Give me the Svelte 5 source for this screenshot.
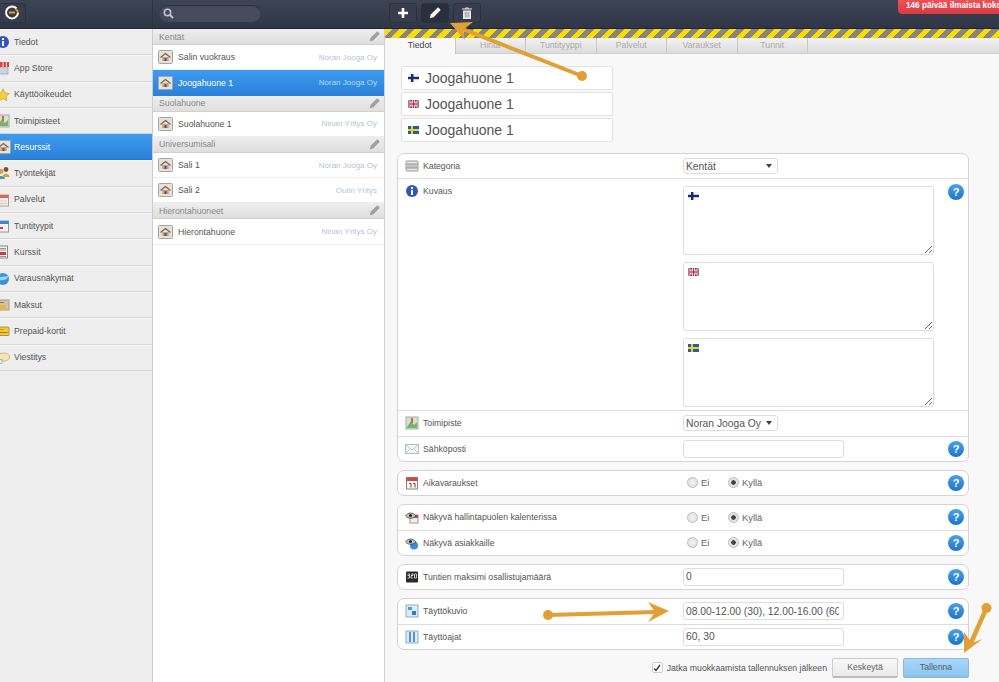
<script>
  const side = [
    ['Tiedot','info'],['App Store','store'],['Käyttöoikeudet','star'],['Toimipisteet','map'],
    ['Resurssit','house'],['Työntekijät','people'],['Palvelut','cal'],['Tuntityypit','cal2'],
    ['Kurssit','doc'],['Varausnäkymät','globe'],['Maksut','box'],['Prepaid-kortit','card'],['Viestitys','bubble']
  ];
  const groups = [
    { name:'Kentät', items:[['Salin vuokraus','Noran Jooga Oy'],['Joogahuone 1','Noran Jooga Oy',true]] },
    { name:'Suolahuone', items:[['Suolahuone 1','Ninan Yritys Oy']] },
    { name:'Universumisali', items:[['Sali 1','Noran Jooga Oy'],['Sali 2','Outin Yritys']] },
    { name:'Hierontahuoneet', items:[['Hierontahuone','Ninan Yritys Oy']] }
  ];
  const tabs = ['Tiedot','Hinta','Tuntityyppi','Palvelut','Varaukset','Tunnit'];
  const flags = ['fi','gb','se'];
</script>

{#snippet flag(k)}
  <svg class="flag" width="11" height="8" viewBox="0 0 11 8">
    {#if k==='fi'}
      <rect width="11" height="8" fill="#f4f4f8"/><rect x="3" width="2.4" height="8" fill="#1a2a6c"/><rect y="2.8" width="11" height="2.4" fill="#1a2a6c"/>
    {:else if k==='se'}
      <rect width="11" height="8" fill="#1f5fa8"/><rect x="3" width="2" height="8" fill="#f5cf2a"/><rect y="3" width="11" height="2" fill="#f5cf2a"/>
    {:else}
      <rect width="11" height="8" fill="#2a3a7c"/><path d="M0 0L11 8M11 0L0 8" stroke="#e8d8dc" stroke-width="1.8"/><path d="M0 0L11 8M11 0L0 8" stroke="#c8324a" stroke-width=".6"/><rect x="4" width="3" height="8" fill="#eee"/><rect y="2.5" width="11" height="3" fill="#eee"/><rect x="4.8" width="1.4" height="8" fill="#c8324a"/><rect y="3.3" width="11" height="1.4" fill="#c8324a"/>
    {/if}
  </svg>
{/snippet}

{#snippet houseIcon()}
  <svg width="15" height="14" viewBox="0 0 15 14">
    <rect x=".5" y=".5" width="14" height="13" rx="1" fill="#e4e2de" stroke="#a4a4a2"/>
    <path d="M2.5 7.5L7.5 3.5L12.5 7.5" fill="none" stroke="#8a5a42" stroke-width="1.2"/>
    <rect x="4.3" y="7" width="6.4" height="4" fill="#c0a288"/><rect x="6.5" y="8.2" width="2" height="2.8" fill="#6a4a38"/>
  </svg>
{/snippet}

{#snippet icon(k)}
  <svg width="14" height="14" viewBox="0 0 14 14">
    {#if k==='info'}
      <circle cx="7" cy="7" r="6" fill="#2f55c0"/><rect x="6" y="6" width="2" height="5" fill="#fff"/><rect x="6" y="3" width="2" height="2" fill="#fff"/>
    {:else if k==='store'}
      <rect x="2" y="6" width="10" height="7" fill="#c9d4e2" stroke="#8494a8" stroke-width=".6"/><rect x="1" y="1" width="12" height="5" fill="#d8443c"/><path d="M3.5 1v5M7 1v5M10.5 1v5" stroke="#f3e6e2"/>
    {:else if k==='star'}
      <path d="M7 .8l1.9 4 4.4.6-3.2 3 .8 4.4L7 10.7l-3.9 2.1.8-4.4-3.2-3 4.4-.6z" fill="#efd23c" stroke="#b89a2a" stroke-width=".6"/>
    {:else if k==='map'}
      <rect x="1" y="1" width="12" height="12" fill="#d4e4cc" stroke="#a4aea6"/><path d="M2 11L6 5l3 4 3-3v6H2z" fill="#7ab06a"/><path d="M7 2v5" stroke="#d8644c" stroke-width="2"/>
    {:else if k==='people'}
      <circle cx="5" cy="5.500" r="2.400" fill="#d89a5c"/><path d="M1 13c0-4 8-4 8 0z" fill="#3f9ac0"/><circle cx="10" cy="3.500" r="2.400" fill="#8a4a30"/><path d="M6.500 11c0-4.500 7-4.500 7 0z" fill="#d8a030"/>
    {:else if k==='cal'}
      <rect x="1.5" y="2" width="11" height="11" fill="#f6f2ec" stroke="#a8a29a"/><rect x="1.5" y="2" width="11" height="3" fill="#e0645c"/><path d="M3 8h8M3 10.500h8" stroke="#d8c8b8"/>
    {:else if k==='cal2'}
      <rect x="1.5" y="2" width="11" height="11" fill="#f6f2ec" stroke="#8a9aa8"/><rect x="1.5" y="2" width="11" height="3" fill="#3c8ac8"/><rect x="3" y="8" width="4" height="2" fill="#d8443c"/>
    {:else if k==='doc'}
      <rect x="2.500" y="1" width="9" height="12" fill="#f2f2f2" stroke="#8a8a8a"/><rect x="4" y="7" width="6" height="3" fill="#c83c3c"/><path d="M4 3.500h6M4 5h6M4 11.500h6" stroke="#999"/>
    {:else if k==='globe'}
      <circle cx="7" cy="7" r="6" fill="#3a94dc"/><path d="M2 6c3-2 7-1 10-2 0 3-3 4-5 4s-3 1-5-2z" fill="#a4d4f2"/>
    {:else if k==='box'}
      <rect x="1" y="2" width="12" height="10" fill="#d0c4a4" stroke="#a89c80"/><rect x="4" y="7" width="6" height="5" fill="#e0b850"/><path d="M4 4.500h4" stroke="#8a7a5a"/>
    {:else if k==='card'}
      <rect x="1" y="3" width="12" height="8.500" rx="1" fill="#f0c83c" stroke="#b8962a"/><path d="M2.500 8.500h9" stroke="#a07c20"/><path d="M3 5.500h5" stroke="#c09a2a"/>
    {:else if k==='bubble'}
      <ellipse cx="7.500" cy="6" rx="6" ry="4" fill="#f4e8b0" stroke="#c8b880"/><rect x="1" y="8.500" width="5" height="4" fill="#dcecf4" stroke="#88a0b0" stroke-width=".6"/>
    {:else if k==='bars'}
      <rect x="1" y="2" width="12" height="10" rx="1" fill="#e6e6e6" stroke="#999"/><rect x="1.500" y="5" width="11" height="4" fill="#c4c4c4"/><path d="M1 5h12M1 9h12" stroke="#999"/>
    {:else if k==='mail'}
      <rect x=".5" y="2.500" width="13" height="9" fill="#f4f6f8" stroke="#b4bec6"/><path d="M1 3l6 5 6-5M1 11l4-4M13 11l-4-4" fill="none" stroke="#c0cad2"/>
    {:else if k==='eyecal'}
      <rect x="5" y="5" width="8" height="8" fill="#f4f0ec" stroke="#999"/><rect x="5" y="5" width="8" height="3" fill="#cc3c3c"/><path d="M.5 6C3 2 8 2 11 6 8 9 3 9 .5 6z" fill="#c4c4c4" stroke="#333" stroke-width=".7"/><circle cx="5.500" cy="5.500" r="1.500" fill="#222"/>
    {:else if k==='eyeblue'}
      <circle cx="9" cy="9.500" r="4" fill="#3a8ed8"/><path d="M.5 6C3 2 8 2 11 6 8 9 3 9 .5 6z" fill="#c4c4c4" stroke="#333" stroke-width=".7"/><circle cx="5.500" cy="5.500" r="1.500" fill="#222"/>
    {:else if k==='count'}
      <rect x="1" y="1.500" width="12" height="11" rx="1" fill="#2a2a2a"/><path d="M2.500 4h2v1.500h-2M4.500 5.500V8h-2M6 4h2v1.500H6V8h2M9.500 4h2v4h-2z" fill="none" stroke="#eee" stroke-width=".8"/>
    {:else if k==='pattern'}
      <rect x="1" y="1" width="12" height="12" fill="#dcecf8" stroke="#8cacc8"/><rect x="3" y="3" width="4" height="3" fill="#5a94d8"/><rect x="7" y="7" width="4" height="4" fill="#3a7cc8"/>
    {:else if k==='times'}
      <rect x="1" y="1" width="12" height="12" fill="#dcecf8" stroke="#8cacc8"/><rect x="4" y="2" width="2" height="10" fill="#5a94d0"/><rect x="8" y="2" width="2" height="10" fill="#5a94d0"/>
    {:else if k==='date'}
      <rect x="1.500" y="1.500" width="11" height="11.500" fill="#f6f4f0" stroke="#888"/><rect x="1.500" y="1.500" width="11" height="3.500" fill="#d8443c"/><path d="M4 7.500h2v4M8 7.500h2v4" fill="none" stroke="#555"/>
    {/if}
  </svg>
{/snippet}

{#snippet help()}
  <span class="help">?</span>
{/snippet}

{#snippet radios()}
  <div class="radios">
    <span class="radio"></span><span class="rlabel">Ei</span>
    <span class="radio on"></span><span class="rlabel">Kyllä</span>
  </div>
{/snippet}

{#snippet pencil(color, size)}
  <svg width={size} height={size} viewBox="0 0 12 12"><path d="M.8 11.200l.9-3.800L8.500.8a1 1 0 0 1 1.300 0l1.400 1.400a1 1 0 0 1 0 1.300L4.600 10.300z" fill={color}/></svg>
{/snippet}

<div class="page">
  <header class="top">
    <div class="logo-wrap">
      <button class="tool logo" aria-label="Logo">
        <svg width="16" height="16" viewBox="0 0 16 16"><path d="M12.500 3.500A6 6 0 1 0 14 8" fill="none" stroke="#fff" stroke-width="2"/><path d="M5 7.500h6" stroke="#e8a020" stroke-width="2"/><path d="M11.500 4a5 5 0 0 1 2.500 4" fill="none" stroke="#e8a020" stroke-width="2"/></svg>
      </button>
    </div>
    <div class="search-wrap">
      <div class="search">
        <svg width="11" height="11" viewBox="0 0 11 11"><circle cx="4.500" cy="4.500" r="3.200" fill="none" stroke="#c4c8d0" stroke-width="1.500"/><path d="M7 7l3 3" stroke="#c4c8d0" stroke-width="1.800"/></svg>
      </div>
    </div>
    <div class="tools">
      <button class="tool" aria-label="Lisää"><svg width="12" height="12" viewBox="0 0 12 12"><path d="M6 1v10M1 6h10" stroke="#fff" stroke-width="2.600"/></svg></button>
      <button class="tool active" aria-label="Muokkaa">{@render pencil('#f2f2f2', 12)}</button>
      <button class="tool" aria-label="Poista"><svg width="12" height="13" viewBox="0 0 12 13"><path d="M2 3.500h8V12H2z" fill="#e8e8e8"/><path d="M1 2h10M4.500 2V1h3v1" stroke="#e8e8e8" fill="none"/><path d="M4.300 5v5.500M6 5v5.500M7.700 5v5.500" stroke="#7a8090" stroke-width=".7"/></svg></button>
    </div>
    <div class="badge">146 päivää ilmaista koko</div>
  </header>

  <div class="main">
    <nav class="side">
      {#each side as [label, ic]}
        <div class="side-item" class:sel={label==='Resurssit'}>
          <span class="side-ic">
            {#if ic==='house'}{@render houseIcon()}{:else}{@render icon(ic)}{/if}
          </span>
          <span>{label}</span>
        </div>
      {/each}
    </nav>

    <section class="list">
      {#each groups as g}
        <div class="ghead"><span>{g.name}</span>{@render pencil('#a0a0a0', 11)}</div>
        {#each g.items as [n, o, s]}
          <div class="litem" class:sel={s}>
            {@render houseIcon()}
            <span class="lname">{n}</span>
            <span class="lorg">{o}</span>
          </div>
        {/each}
      {/each}
    </section>

    <section class="content">
      <div class="stripes"></div>
      <div class="tabs">
        {#each tabs as t, i}<div class="tab" class:on={i===0}>{t}</div>{/each}
      </div>
      <div class="body">
        <div class="names">
          {#each flags as f}
            <div class="name">{@render flag(f)}<span>Joogahuone 1</span></div>
          {/each}
        </div>

        <div class="group">
          <div class="row short">
            <div class="lab">{@render icon('bars')}<span>Kategoria</span></div>
            <div class="sel-box wide"><span>Kentät</span><i class="caret"></i></div>
          </div>
          <div class="row tall">
            <div class="lab">{@render icon('info')}<span>Kuvaus</span></div>
            <div class="areas">
              {#each flags as f}
                <div class="area">
                  <textarea aria-label="Kuvaus {f}"></textarea>
                  <span class="aflag">{@render flag(f)}</span>
                </div>
              {/each}
            </div>
            {@render help()}
          </div>
          <div class="row">
            <div class="lab">{@render icon('map')}<span>Toimipiste</span></div>
            <div class="sel-box"><span>Noran Jooga Oy</span><i class="caret"></i></div>
          </div>
          <div class="row">
            <div class="lab">{@render icon('mail')}<span>Sähköposti</span></div>
            <input class="inp" aria-label="Sähköposti" />
            {@render help()}
          </div>
        </div>

        <div class="group">
          <div class="row">
            <div class="lab">{@render icon('date')}<span>Aikavaraukset</span></div>
            {@render radios()}
            {@render help()}
          </div>
        </div>

        <div class="group">
          <div class="row">
            <div class="lab">{@render icon('eyecal')}<span>Näkyvä hallintapuolen kalenterissa</span></div>
            {@render radios()}
            {@render help()}
          </div>
          <div class="row">
            <div class="lab">{@render icon('eyeblue')}<span>Näkyvä asiakkaille</span></div>
            {@render radios()}
            {@render help()}
          </div>
        </div>

        <div class="group">
          <div class="row">
            <div class="lab">{@render icon('count')}<span>Tuntien maksimi osallistujamäärä</span></div>
            <input class="inp" value="0" aria-label="Maksimi" />
            {@render help()}
          </div>
        </div>

        <div class="group">
          <div class="row">
            <div class="lab">{@render icon('pattern')}<span>Täyttökuvio</span></div>
            <input class="inp" value="08.00-12.00 (30), 12.00-16.00 (60)" aria-label="Täyttökuvio" />
            {@render help()}
          </div>
          <div class="row">
            <div class="lab">{@render icon('times')}<span>Täyttöajat</span></div>
            <input class="inp" value="60, 30" aria-label="Täyttöajat" />
            {@render help()}
          </div>
        </div>

        <div class="actions">
          <span class="check"><svg width="8" height="8" viewBox="0 0 8 8"><path d="M1 4.500l2 2L7 1" fill="none" stroke="#333" stroke-width="1.300"/></svg></span>
          <span class="ctext">Jatka muokkaamista tallennuksen jälkeen</span>
          <button class="btn">Keskeytä</button>
          <button class="btn primary">Tallenna</button>
        </div>
      </div>
    </section>
  </div>

  <svg class="arrows" width="999" height="682" viewBox="0 0 999 682">
    <g fill="#e0a036" stroke="#e0a036">
      <circle cx="582" cy="76" r="5" stroke="none"/>
      <line x1="582" y1="76" x2="460" y2="28" stroke-width="4"/>
      <polygon points="450,23 473,22 463,30 465,40" stroke="none"/>
      <circle cx="548" cy="615" r="5" stroke="none"/>
      <line x1="548" y1="615" x2="656" y2="612" stroke-width="4"/>
      <polygon points="669,611 648,602 655,612 648,622" stroke="none"/>
      <circle cx="986.500" cy="608" r="5" stroke="none"/>
      <line x1="986.500" y1="608" x2="970" y2="645" stroke-width="4.500"/>
      <polygon points="964,653 982.500,639 972,643 964,632" stroke="none"/>
    </g>
  </svg>
</div>

<style>
  :global(body) { margin: 0; background: #f8f8f8; overflow: hidden; }
  .page { position: relative; width: 999px; height: 682px; overflow: hidden; font-family: "Liberation Sans", Arial, sans-serif; font-size: 8.7px; color: #555; display: flex; flex-direction: column; }

  .top { height: 28px; flex: none; display: flex; background: linear-gradient(#3d4454, #2f3646); border-bottom: 1px solid #20242e; position: relative; }
  .logo-wrap { width: 153px; flex: none; display: flex; align-items: flex-start; padding-top: 3px; box-sizing: border-box; }
  .logo { margin-left: -2px; width: 30px; }
  .search-wrap { width: 232px; flex: none; padding: 5px 0 0 6px; box-sizing: border-box; border-left: 1px solid #2c3240; margin-left: -1px; }
  .search { width: 102px; height: 17px; border-radius: 9px; background: #454b5b; box-shadow: inset 0 1px 1px #2a2f3a; display: flex; align-items: center; padding-left: 4px; box-sizing: border-box; }
  .tools { display: flex; gap: 4px; padding: 3px 0 0 5px; }
  .tool { width: 28px; height: 20px; padding: 0; display: flex; align-items: center; justify-content: center; background: #373d4d; border: 1px solid #2c313e; border-radius: 3px; }
  .tool.active { background: #2a2f3d; }
  .badge { position: absolute; left: 898px; top: -2px; width: 101px; height: 16px; box-sizing: border-box; padding: 3px 0 0 8px; background: linear-gradient(#f0535b, #d93a42); color: #fff; font-weight: bold; font-size: 8.200px; border-radius: 0 0 0 4px; white-space: nowrap; overflow: hidden; }

  .main { flex: 1; display: flex; min-height: 0; }

  .side { width: 153px; flex: none; background: #eee; border-right: 1px solid #ccc; box-sizing: border-box; }
  .side-item { height: 26.3px; box-sizing: border-box; display: flex; align-items: center; padding-left: 14px; position: relative; background: #eee; border-bottom: 1px solid #d6d6d6; box-shadow: inset 0 1px 0 #f8f8f8; color: #555; }
  .side-item.sel { background: linear-gradient(#3d9cf0, #2a80d8); color: #fff; border-bottom-color: #2a78cc; box-shadow: none; }
  .side-ic { position: absolute; left: -4px; top: 6px; line-height: 0; }

  .list { width: 232px; flex: none; background: #fff; border-right: 1px solid #d0d0d0; box-sizing: border-box; }
  .ghead { height: 16px; box-sizing: border-box; padding: 0 4px 0 6px; display: flex; align-items: center; justify-content: space-between; background: linear-gradient(#eee, #dedede); border-bottom: 1px solid #d0d0d0; color: #888; }
  .litem { height: 25.3px; box-sizing: border-box; display: flex; align-items: center; padding: 0 7px 0 5px; border-bottom: 1px solid #eee; }
  .litem.sel { background: linear-gradient(#3d9cf0, #2a80d8); color: #fff; border-bottom: none; }
  .lname { margin-left: 5px; flex: 1; color: inherit; }
  .lorg { color: #b4c4d8; font-size: 8px; }
  .litem.sel .lorg { color: #b8d8f4; }

  .content { flex: 1; background: #f8f8f8; min-width: 0; }
  .stripes { height: 9px; background: repeating-linear-gradient(135deg, #fddc00 0 5px, #86867a 5px 10.600px); }
  .tabs { height: 16px; display: flex; background: linear-gradient(#f2f2f2, #dcdcdc); border-bottom: 1px solid #d0d0d0; box-sizing: border-box; }
  .tab { width: 70.500px; box-sizing: border-box; text-align: center; line-height: 15px; color: #aaa; border-right: 1px solid #c8c8c8; }
  .tab.on { background: #f8f8f8; color: #444; height: 16px; }

  .body { padding: 12px 0 0 12px; display: flex; flex-direction: column; }
  .names { padding-left: 4px; display: flex; flex-direction: column; gap: 2px; margin-bottom: 11px; }
  .name { width: 212px; height: 24px; box-sizing: border-box; background: #fff; border: 1px solid #e2e2e2; border-radius: 2px; display: flex; align-items: center; padding-left: 6px; gap: 6px; font-size: 14px; color: #555; }
  .flag { display: block; flex: none; }

  .group { width: 572px; box-sizing: border-box; background: #fff; border: 1px solid #d4d4d4; border-radius: 7px; margin-bottom: 8.200px; }
  .row { position: relative; height: 25.600px; box-sizing: border-box; display: flex; align-items: center; border-bottom: 1px solid #ddd; }
  .row:last-child { border-bottom: none; height: 24px; }
  .row.short { height: 25px; }
  .row.tall { height: 232px; align-items: flex-start; }
  .row.tall .lab { margin-top: 5px; }
  .lab { width: 285px; flex: none; display: flex; align-items: center; gap: 4px; padding-left: 7px; box-sizing: border-box; color: #555; }
  .help { position: absolute; left: 550px; top: 50%; margin-top: -8px; width: 16px; height: 16px; border-radius: 50%; background: linear-gradient(#4aa2ea, #1f74c8); color: #fff; font-size: 11px; font-weight: bold; line-height: 16px; text-align: center; }
  .row.tall .help { top: 5px; margin-top: 0; }

  .sel-box { height: 16px; box-sizing: border-box; background: #fff; border: 1px solid #ddd; border-radius: 3px; display: flex; align-items: center; padding: 0 4px 0 2px; font-size: 10.300px; color: #555; gap: 5px; }
  .sel-box.wide { width: 95px; justify-content: space-between; }
  .caret { width: 0; height: 0; border: 3.500px solid transparent; border-top: 4px solid #444; border-bottom: none; margin-right: 1px; }

  .areas { display: flex; flex-direction: column; gap: 7px; padding-top: 7px; }
  .area { position: relative; height: 69px; line-height: 0; }
  .area textarea { display: block; width: 251px; height: 69px; margin: 0; box-sizing: border-box; border: 1px solid #ddd; border-radius: 3px; background: #fff; padding: 4px; }
  .aflag { position: absolute; left: 5px; top: 6px; }

  .inp { width: 161px; height: 18px; margin: 0; box-sizing: border-box; border: 1px solid #ddd; border-radius: 3px; background: #fff; padding: 0 4px 0 2px; font: 10.300px "Liberation Sans", Arial, sans-serif; color: #555; outline: none; }

  .radios { display: flex; align-items: center; font-size: 9.400px; color: #666; }
  .radio { width: 9px; height: 9px; margin-left: 4px; border-radius: 50%; background: radial-gradient(#f2f2f2, #ddd); border: 1px solid #bbb; box-sizing: content-box; }
  .radio.on { background: radial-gradient(#444 0 2px, #e4e4e4 2.500px); }
  .rlabel { margin-left: 3px; width: 23px; }

  .actions { width: 572px; height: 20px; display: flex; align-items: center; justify-content: flex-end; }
  .check { width: 11px; height: 11px; background: #fff; border: 1px solid #ccc; border-radius: 2px; display: flex; align-items: center; justify-content: center; margin-right: 4px; box-sizing: border-box; }
  .ctext { color: #555; }
  .btn { width: 66px; height: 20px; padding: 0; border: 1px solid #ccc; border-bottom: 2px solid #bbb; border-radius: 2px; background: linear-gradient(#f8f8f8, #eaeaea); font: 8.700px "Liberation Sans", Arial, sans-serif; color: #666; margin-left: 5px; }
  .btn.primary { background: linear-gradient(#a8d6f8, #8cc6f2); border-color: #8cb8dc; color: #50606e; }

  .arrows { position: absolute; left: 0; top: 0; pointer-events: none; }
</style>
